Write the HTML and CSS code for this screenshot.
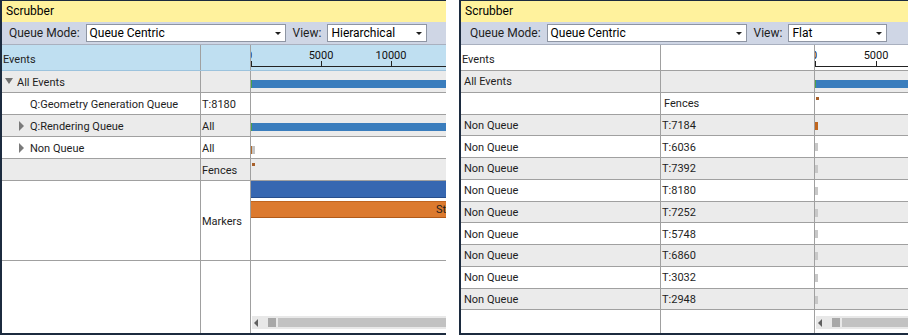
FILE: index.html
```html
<!DOCTYPE html>
<html lang="en">
<head>
    <meta charset="UTF-8">
    <title>Scrubber</title>
    <link rel="stylesheet" href="styles.css">
</head>
<body>
    <div class="page">
        <!-- Hierarchical view -->
        <section class="panel panel-left">
            <div class="titlebar">Scrubber</div>
            <div class="toolbar">
                <span class="label">Queue Mode:</span>
                <div class="combo combo-mode">Queue Centric<span class="arrow"></span></div>
                <span class="label">View:</span>
                <div class="combo combo-view">Hierarchical<span class="arrow"></span></div>
            </div>
            <div class="grid">
                <div class="row head">
                    <div class="cell c1">Events</div>
                    <div class="cell c2"></div>
                    <div class="cell c3 ruler">
                        <span class="tick-label" style="left: -2px">0</span>
                        <span class="tick-label" style="left: 70px">5000</span>
                        <span class="tick-label" style="left: 140px">10000</span>
                        <span class="tick" style="left: 0"></span>
                        <span class="tick" style="left: 70px"></span>
                        <span class="tick" style="left: 140px"></span>
                        <span class="baseline"></span>
                    </div>
                </div>
                <div class="row alt">
                    <div class="cell c1"><span class="exp exp-open"></span>All Events</div>
                    <div class="cell c2"></div>
                    <div class="cell c3"><span class="bar blue" style="top: 9px"></span></div>
                </div>
                <div class="row">
                    <div class="cell c1 lvl2">Q:Geometry Generation Queue</div>
                    <div class="cell c2">T:8180</div>
                    <div class="cell c3"></div>
                </div>
                <div class="row alt">
                    <div class="cell c1 lvl2"><span class="exp exp-closed"></span>Q:Rendering Queue</div>
                    <div class="cell c2">All</div>
                    <div class="cell c3"><span class="bar blue" style="top: 8px"></span></div>
                </div>
                <div class="row">
                    <div class="cell c1 lvl2"><span class="exp exp-closed"></span>Non Queue</div>
                    <div class="cell c2">All</div>
                    <div class="cell c3"><span class="bar gray brown-edge" style="top: 9px"></span></div>
                </div>
                <div class="row alt">
                    <div class="cell c1"></div>
                    <div class="cell c2">Fences</div>
                    <div class="cell c3"><span class="dot"></span></div>
                </div>
                <div class="row markers">
                    <div class="cell c1"></div>
                    <div class="cell c2">Markers</div>
                    <div class="cell c3">
                        <span class="marker marker-blue"></span>
                        <span class="marker marker-orange"><span class="marker-text">Start</span></span>
                    </div>
                </div>
                <div class="row filler">
                    <div class="cell c1"></div>
                    <div class="cell c2"></div>
                    <div class="cell c3">
                        <div class="hscroll"><span class="hs-arrow"></span><span class="hs-thumb"></span><span class="hs-track"></span></div>
                    </div>
                </div>
            </div>
        </section>

        <!-- Flat view -->
        <section class="panel panel-right">
            <div class="titlebar">Scrubber</div>
            <div class="toolbar">
                <span class="label">Queue Mode:</span>
                <div class="combo combo-mode">Queue Centric<span class="arrow"></span></div>
                <span class="label">View:</span>
                <div class="combo combo-flat">Flat<span class="arrow"></span></div>
            </div>
            <div class="grid">
                <div class="row head">
                    <div class="cell c1">Events</div>
                    <div class="cell c2"></div>
                    <div class="cell c3 ruler">
                        <span class="tick-label" style="left: -1px">0</span>
                        <span class="tick-label" style="left: 61px">5000</span>
                        <span class="tick" style="left: 0"></span>
                        <span class="tick" style="left: 61px"></span>
                        <span class="baseline"></span>
                    </div>
                </div>
                <div class="row alt">
                    <div class="cell c1 pad">All Events</div>
                    <div class="cell c2"></div>
                    <div class="cell c3"><span class="bar blue" style="top: 9px"></span></div>
                </div>
                <div class="row">
                    <div class="cell c1"></div>
                    <div class="cell c2 pad">Fences</div>
                    <div class="cell c3"><span class="dot"></span></div>
                </div>
                <div class="row alt">
                    <div class="cell c1 pad">Non Queue</div>
                    <div class="cell c2">T:7184</div>
                    <div class="cell c3"><span class="stub brown"></span></div>
                </div>
                <div class="row">
                    <div class="cell c1 pad">Non Queue</div>
                    <div class="cell c2">T:6036</div>
                    <div class="cell c3"><span class="stub"></span></div>
                </div>
                <div class="row alt">
                    <div class="cell c1 pad">Non Queue</div>
                    <div class="cell c2">T:7392</div>
                    <div class="cell c3"><span class="stub"></span></div>
                </div>
                <div class="row">
                    <div class="cell c1 pad">Non Queue</div>
                    <div class="cell c2">T:8180</div>
                    <div class="cell c3"><span class="stub"></span></div>
                </div>
                <div class="row alt">
                    <div class="cell c1 pad">Non Queue</div>
                    <div class="cell c2">T:7252</div>
                    <div class="cell c3"><span class="stub"></span></div>
                </div>
                <div class="row">
                    <div class="cell c1 pad">Non Queue</div>
                    <div class="cell c2">T:5748</div>
                    <div class="cell c3"><span class="stub"></span></div>
                </div>
                <div class="row alt">
                    <div class="cell c1 pad">Non Queue</div>
                    <div class="cell c2">T:6860</div>
                    <div class="cell c3"><span class="stub"></span></div>
                </div>
                <div class="row">
                    <div class="cell c1 pad">Non Queue</div>
                    <div class="cell c2">T:3032</div>
                    <div class="cell c3"><span class="stub"></span></div>
                </div>
                <div class="row alt">
                    <div class="cell c1 pad">Non Queue</div>
                    <div class="cell c2">T:2948</div>
                    <div class="cell c3"><span class="stub"></span></div>
                </div>
                <div class="row filler">
                    <div class="cell c1"></div>
                    <div class="cell c2"></div>
                    <div class="cell c3">
                        <div class="hscroll"><span class="hs-arrow"></span><span class="hs-thumb"></span><span class="hs-track"></span></div>
                    </div>
                </div>
            </div>
        </section>
    </div>
</body>
</html>
```

FILE: styles.css
```css
* {
    box-sizing: border-box;
}
body {
    margin: 0;
    background: #fff;
    font-family: 'Roboto', 'Noto Sans', sans-serif;
    font-size: 12px;
    color: #1e1e1e;
}
.page {
    display: flex;
    gap: 13px;
    width: 908px;
    height: 335px;
    overflow: hidden;
}
.panel {
    display: flex;
    flex-direction: column;
    height: 335px;
    overflow: hidden;
    border-top: 1px solid #1c2b3f;
    border-left: 2px solid #1c2b3f;
    border-bottom: 2px solid #1c2b3f;
}
.panel-left {
    width: 446px;
    flex: none;
    --c1: 199px;
    --c2: 50px;
}
.panel-right {
    flex: 1;
    --c1: 200px;
    --c2: 154px;
}

/* title + toolbar */
.titlebar {
    height: 21px;
    line-height: 21px;
    padding-left: 4px;
    background: #fff29d;
    color: #000;
}
.toolbar {
    display: flex;
    align-items: center;
    height: 23px;
    padding-left: 7px;
    background: #cfd6e5;
    border-bottom: 1px solid #a9b0bf;
}
.panel-right .toolbar {
    padding-left: 9px;
}
.label {
    color: #1e1e1e;
    margin-right: 6px;
}
.combo {
    position: relative;
    height: 18px;
    line-height: 16px;
    padding-left: 3px;
    margin-right: 7px;
    background: #fff;
    border: 1px solid #8e95a3;
    color: #000;
}
.combo-mode { width: 200px; }
.combo-view { width: 100px; }
.combo-flat { width: 99px; }
.arrow {
    position: absolute;
    right: 4px;
    top: 7px;
    border-left: 3px solid transparent;
    border-right: 3px solid transparent;
    border-top: 3px solid #1e1e1e;
}

/* grid */
.grid {
    flex: 1;
    display: flex;
    flex-direction: column;
    font-size: 11px;
}
.row {
    display: flex;
    height: 22px;
    border-bottom: 1px solid #a0a0a0;
    background: #fff;
}
.panel-right .row {
    height: 21.75px;
}
.row.alt {
    background: #ebebeb;
}
.row.head {
    height: 26px;
}
.panel-left .row.head {
    background: #bfdff1;
    border-bottom-color: #9cc3dd;
}
.row.markers {
    height: 80px;
}
.row.filler,
.panel-right .row.filler {
    flex: 1;
    height: auto;
    border-bottom: none;
}
.cell {
    display: flex;
    align-items: center;
    padding-top: 1px;
    white-space: nowrap;
    overflow: hidden;
}
.c1 {
    width: var(--c1);
    flex: none;
    border-right: 1px solid #a0a0a0;
}
.c2 {
    width: var(--c2);
    flex: none;
    padding-left: 1px;
    border-right: 1px solid #a0a0a0;
}
.c3 {
    flex: 1;
    position: relative;
    align-items: stretch;
    padding-top: 0;
}
.head .c1 {
    padding-left: 1px;
    padding-top: 3px;
}
.pad {
    padding-left: 3px;
}
.lvl2 {
    padding-left: 28px;
    position: relative;
}
.panel-left .alt .c1:not(.lvl2) {
    padding-left: 15px;
    position: relative;
}

/* tree expanders */
.exp {
    position: absolute;
    width: 0;
    height: 0;
}
.exp-open {
    left: 3px;
    top: 7px;
    border-left: 4px solid transparent;
    border-right: 4px solid transparent;
    border-top: 6px solid #707070;
}
.exp-closed {
    left: 17px;
    top: 6px;
    border-top: 5px solid transparent;
    border-bottom: 5px solid transparent;
    border-left: 5px solid #7a7a7a;
}

/* time ruler */
.ruler {
    display: block;
}
.tick-label {
    position: absolute;
    top: 4px;
    transform: translateX(-50%);
    color: #111;
}
.tick {
    position: absolute;
    top: 16px;
    width: 1px;
    height: 5px;
    background: #222;
}
.baseline {
    position: absolute;
    left: 0;
    right: 0;
    top: 21px;
    height: 1px;
    background: #222;
}

/* bars */
.bar {
    position: absolute;
    left: 0;
    right: 0;
    height: 8px;
}
.bar.blue {
    background: #3a7dbd;
    border-left: 1px solid #4aa04a;
}
.bar.gray {
    right: auto;
    width: 4px;
    background: #c4c4c4;
}
.brown-edge {
    border-left: 1px solid #b06a2c;
}
.dot {
    position: absolute;
    left: 1px;
    top: 4px;
    width: 3px;
    height: 3px;
    background: #a8602a;
}
.stub {
    position: absolute;
    left: 0;
    top: 7px;
    width: 3px;
    height: 8px;
    background: #c8c8c8;
}
.stub.brown {
    background: #c0661e;
}
.marker {
    position: absolute;
    left: 0;
    right: 0;
    height: 17px;
}
.marker-blue {
    top: 0;
    background: #3667b1;
    border-bottom: 1px solid #274e8c;
}
.marker-orange {
    top: 20px;
    background: #dc7a2f;
    border-top: 1px solid #c0641f;
    border-bottom: 1px solid #b05a1a;
}
.marker-text {
    position: absolute;
    left: 185px;
    top: 0;
    line-height: 15px;
    color: #1e1e1e;
}

/* horizontal scrollbar */
.hscroll {
    position: absolute;
    left: 1px;
    right: 0;
    bottom: 4px;
    height: 13px;
    display: flex;
    align-items: center;
    background: #e8e8e8;
}
.hs-arrow {
    margin-left: 2px;
    width: 0;
    height: 0;
    border-top: 4px solid transparent;
    border-bottom: 4px solid transparent;
    border-right: 4px solid #606060;
}
.hs-thumb {
    margin-left: 10px;
    width: 8px;
    height: 9px;
    background: #a8a8a8;
}
.hs-track {
    flex: 1;
    margin-left: 2px;
    height: 9px;
    background: #c2c2c2;
}
```
